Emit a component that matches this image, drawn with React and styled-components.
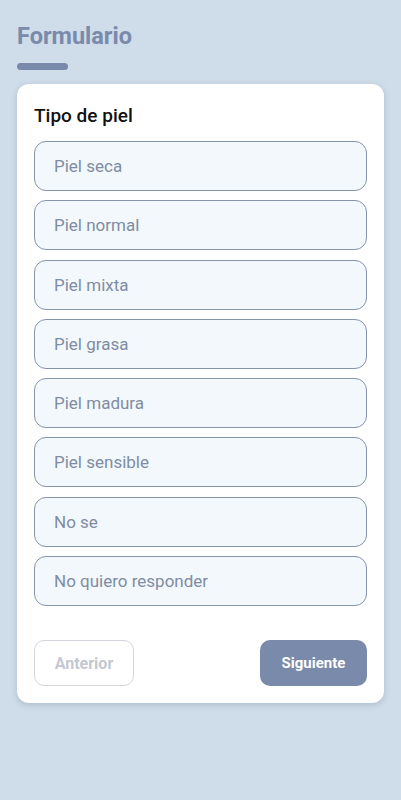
import React, { useState } from "react";
import styled, { createGlobalStyle } from "styled-components";

const GlobalStyle = createGlobalStyle`
  html, body {
    margin: 0;
    padding: 0;
    background: #cfdce9;
    font-family: Roboto, "Noto Sans", sans-serif;
  }
`;

const Page = styled.div`
  min-height: 800px;
  padding: 22px 17px 0;
  box-sizing: border-box;
`;

const Title = styled.h1`
  margin: 0;
  font-size: 23.5px;
  font-weight: 700;
  line-height: 28px;
  color: #7a8aab;
`;

const TitleBar = styled.div`
  width: 51px;
  height: 7px;
  margin-top: 13px;
  border-radius: 4px;
  background: #7a8aab;
`;

const Card = styled.div`
  margin-top: 14px;
  background: #fff;
  border-radius: 12px;
  box-shadow: 0 2px 6px rgba(60, 80, 110, 0.22);
  padding: 19px 17px 17px;
  display: flex;
  flex-direction: column;
`;

const Label = styled.div`
  font-size: 19px;
  font-weight: 500;
  color: #111;
  line-height: 26px;
  margin-bottom: 12px;
`;

const Options = styled.div`
  display: flex;
  flex-direction: column;
  gap: 9.3px;
`;

const Option = styled.button`
  height: 50px;
  box-sizing: border-box;
  border: 1px solid ${({ selected }) => (selected ? "#4e6288" : "#8593ab")};
  border-radius: 12px;
  background: ${({ selected }) => (selected ? "#dfe8f4" : "#f3f8fd")};
  padding: 0 19px;
  text-align: left;
  font-family: Roboto, "Noto Sans", sans-serif;
  font-size: 17px;
  color: #7f8ca2;
  cursor: pointer;
`;

const Footer = styled.div`
  display: flex;
  justify-content: space-between;
  margin-top: 34px;
`;

const NavButton = styled.button`
  height: 46px;
  box-sizing: border-box;
  border-radius: 10px;
  font-family: Roboto, "Noto Sans", sans-serif;
  font-size: ${({ primary }) => (primary ? "15px" : "16px")};
  font-weight: 700;
  padding: 0;
  width: ${({ primary }) => (primary ? "107px" : "100px")};
  border: ${({ primary }) => (primary ? "none" : "1px solid #d3d6dc")};
  background: ${({ primary }) => (primary ? "#7a8aab" : "#fff")};
  color: ${({ primary }) => (primary ? "#fff" : "#c3c8d1")};
`;

const options = [
  "Piel seca",
  "Piel normal",
  "Piel mixta",
  "Piel grasa",
  "Piel madura",
  "Piel sensible",
  "No se",
  "No quiero responder",
];

const App = () => {
  const [selected, setSelected] = useState(null);

  return (
    <>
      <GlobalStyle />
      <Page>
        <Title>Formulario</Title>
        <TitleBar />
        <Card>
          <Label>Tipo de piel</Label>
          <Options>
            {options.map((o) => (
              <Option key={o} selected={selected === o} onClick={() => setSelected(o)}>
                {o}
              </Option>
            ))}
          </Options>
          <Footer>
            <NavButton disabled>Anterior</NavButton>
            <NavButton primary>Siguiente</NavButton>
          </Footer>
        </Card>
      </Page>
    </>
  );
};

export default App;
